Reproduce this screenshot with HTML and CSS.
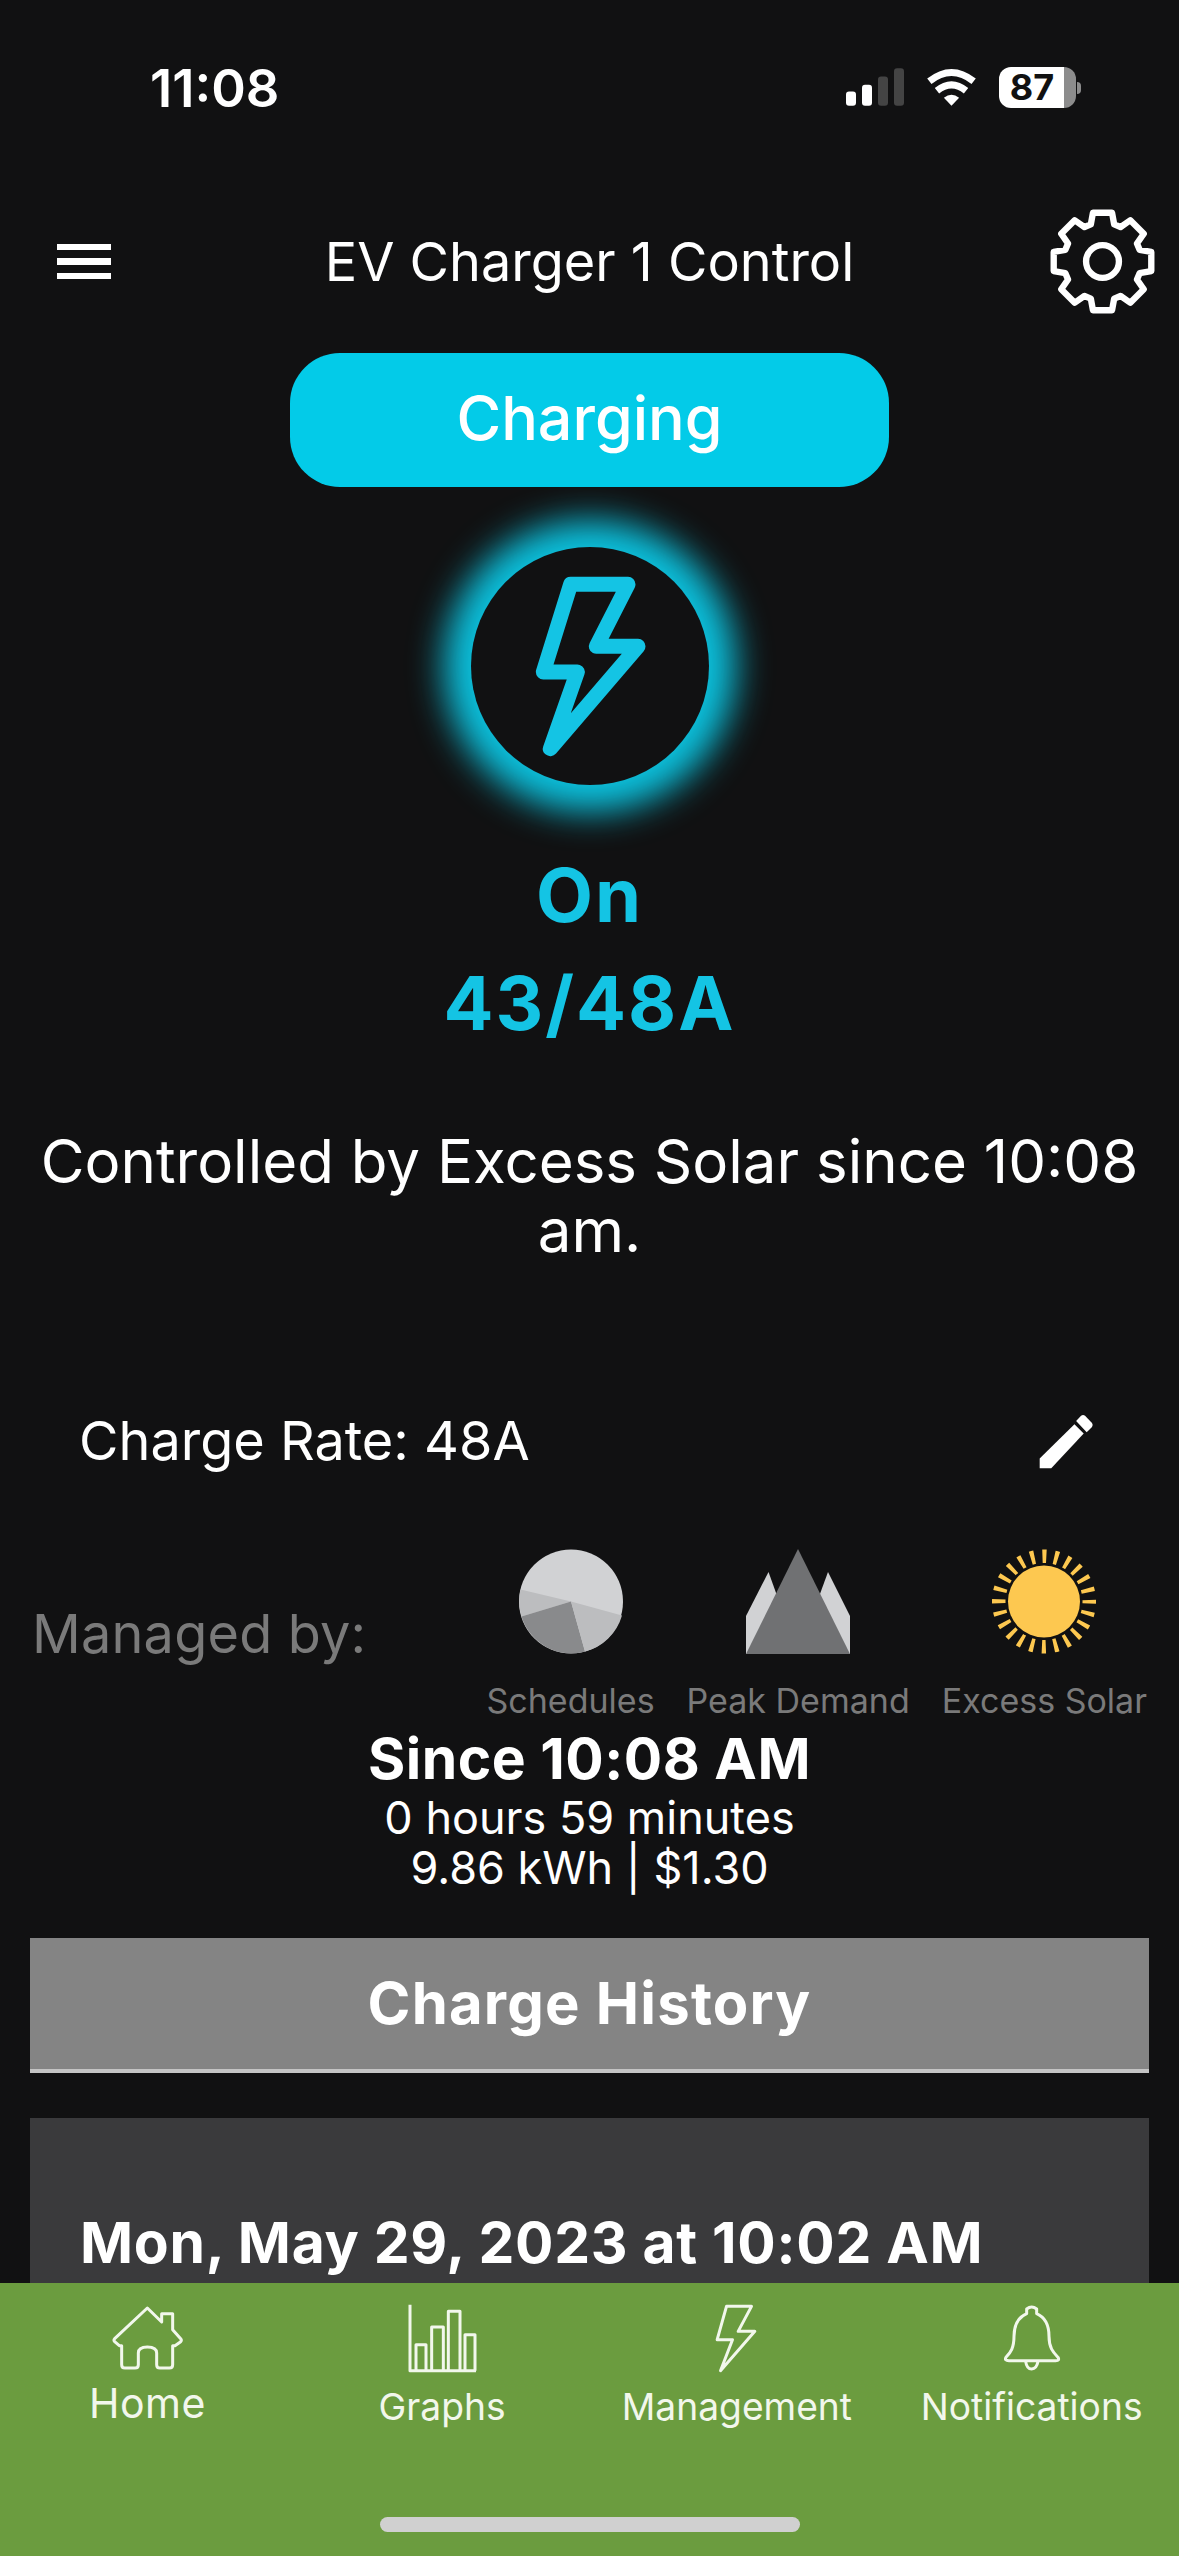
FILE: index.html
```html
<!DOCTYPE html>
<html lang="en">
<head>
    <meta charset="UTF-8">
    <meta name="viewport" content="width=device-width, initial-scale=1.0">
    <title>EV Charger 1 Control</title>
    <link rel="stylesheet" href="styles.css">
</head>
<body>
    <div class="screen">
        <div class="content">
            <div class="status-bar">
                <div class="status-time">11:08</div>
                <div class="status-icons">
                    <svg class="signal-icon" viewBox="138 115 174 113">
                        <rect x="138" y="185" width="30" height="43" rx="9" fill="#fff"/>
                        <rect x="186" y="165" width="30" height="63" rx="9" fill="#fff"/>
                        <rect x="234" y="140" width="30" height="88" rx="9" fill="#444"/>
                        <rect x="282" y="115" width="30" height="113" rx="9" fill="#444"/>
                    </svg>
                    <svg class="wifi-icon" viewBox="378 112 154 118">
                        <path d="M388 155Q455 102 522 155" fill="none" stroke="#fff" stroke-width="21"/>
                        <path d="M411 184Q455 148 499 184" fill="none" stroke="#fff" stroke-width="21"/>
                        <path d="M432 205Q455 187 478 205L455 229Z" fill="#fff"/>
                    </svg>
                    <div class="battery"><span class="battery-level">87</span></div>
                    <div class="battery-nub"></div>
                </div>
            </div>

            <div class="top-nav">
                <div class="menu-icon"><span></span><span></span><span></span></div>
                <div class="top-title">EV Charger 1 Control</div>
                <svg class="gear-icon" viewBox="-49.500 -49.500 99 99">
                    <polygon fill="none" stroke="#fff" stroke-width="6" stroke-linejoin="round" points="-11,-35 -9,-46 9,-46 11,-35 17,-32.500 26.200,-38.900 38.900,-26.200 32.500,-17 35,-11 46,-9 46,9 35,11 32.500,17 38.900,26.200 26.200,38.900 17,32.500 11,35 9,46 -9,46 -11,35 -17,32.500 -26.200,38.900 -38.900,26.200 -32.500,17 -35,11 -46,9 -46,-9 -35,-11 -32.500,-17 -38.900,-26.200 -26.200,-38.900 -17,-32.500"/>
                    <circle r="15.500" fill="none" stroke="#fff" stroke-width="6"/>
                </svg>
            </div>

            <div class="state-btn">Charging</div>

            <div class="charge-ring">
                <svg class="bolt-icon" viewBox="211 140 714 714">
                    <path d="M510 252H682L587 438H712L449 745L530 515H428Z" fill="none" stroke="#14c4e4" stroke-width="45" stroke-linejoin="round"/>
                </svg>
            </div>

            <div class="charge-on">On</div>
            <div class="charge-amps">43/48A</div>
            <div class="controlled-by">Controlled by Excess Solar since 10:08 am.</div>

            <div class="rate-row">
                <div class="rate-label">Charge Rate: 48A</div>
                <svg class="pencil-icon" viewBox="80 48 172 172">
                    <path d="M85 185L190 82L218 110L120 215H85Z" fill="#fff"/>
                    <path d="M195 72L210 56Q216 52 222 56L243 78Q247 84 243 90L227 106Z" fill="#fff"/>
                </svg>
            </div>

            <div class="managed-row">
                <div class="managed-label">Managed by:</div>
                <div class="managed-options">
                    <div class="managed-option">
                        <svg class="managed-icon" viewBox="0 0 104 104">
                            <circle cx="52" cy="52" r="52" fill="#d1d2d4"/>
                            <path d="M1.500 40L52 52L2.500 67A52 52 0 0 1 1.500 40Z" fill="#bcbdbf"/>
                            <path d="M2.500 67L52 52L66 102A52 52 0 0 1 2.500 67Z" fill="#898a8c"/>
                            <path d="M52 52L103 66A52 52 0 0 1 66 102Z" fill="#bcbdbf"/>
                        </svg>
                        <div class="managed-name">Schedules</div>
                    </div>
                    <div class="managed-option">
                        <svg class="managed-icon" viewBox="0 0 104 105">
                            <path d="M0 105V67L22.500 23L52 105Z" fill="#d1d2d4"/>
                            <path d="M104 105V67L82 23L52 105Z" fill="#d1d2d4"/>
                            <path d="M52 0L104 105H0Z" fill="#707173"/>
                        </svg>
                        <div class="managed-name">Peak Demand</div>
                    </div>
                    <div class="managed-option">
                        <svg class="managed-icon" viewBox="0 0 104 104">
                            <circle cx="52" cy="52" r="36" fill="#fdc850"/>
                            <circle cx="52" cy="52" r="45.250" fill="none" stroke="#fdc850" stroke-width="13.500" stroke-dasharray="4 7.850" stroke-dashoffset="2"/>
                        </svg>
                        <div class="managed-name">Excess Solar</div>
                    </div>
                </div>
            </div>

            <div class="session">
                <div class="session-since">Since 10:08 AM</div>
                <div class="session-line">0 hours 59 minutes</div>
                <div class="session-line">9.86 kWh | $1.30</div>
            </div>

            <div class="history-btn">Charge History</div>

            <div class="history-card">
                <div class="history-date">Mon, May 29, 2023 at 10:02 AM</div>
            </div>
        </div>

        <div class="tab-bar">
            <div class="tabs">
                <div class="tab tab-active">
                    <svg class="tab-icon" viewBox="150 40 225 210">
                        <path d="M262 55L305 97V72H338V120L362 147Q366 152 362 156L345 168H338V225Q338 235 328 235H300Q290 235 290 225V190Q290 172 262 172Q235 172 235 190V225Q235 235 225 235H195Q185 235 185 225V168H178L164 156Q160 152 164 147Z"/>
                    </svg>
                    <div class="tab-label">Home</div>
                </div>
                <div class="tab">
                    <svg class="tab-icon" viewBox="1035 40 225 210">
                        <path d="M1050 45V243H1248"/>
                        <path d="M1068 243V165H1098V243M1115 243V112H1150V243M1165 243V65H1200V243M1215 243V135H1245V243"/>
                    </svg>
                    <div class="tab-label">Graphs</div>
                </div>
                <div class="tab">
                    <svg class="tab-icon" viewBox="117.500 40 225 210">
                        <path d="M200 50H275L235 125H285L182 243L218 150H172Z"/>
                    </svg>
                    <div class="tab-label">Management</div>
                </div>
                <div class="tab">
                    <svg class="tab-icon" viewBox="1000 40 225 210">
                        <path d="M1098 72V58Q1113 46 1128 58V72C1158 85 1165 115 1165 140C1165 175 1178 188 1192 203Q1198 213 1185 213H1045Q1030 213 1036 203C1050 188 1060 175 1060 140C1060 115 1068 85 1098 72Z"/>
                        <path d="M1095 215Q1098 238 1113 238Q1128 238 1132 215"/>
                    </svg>
                    <div class="tab-label">Notifications</div>
                </div>
            </div>
            <div class="home-indicator"></div>
        </div>
    </div>
</body>
</html>
```

FILE: styles.css
```css
* {
    box-sizing: border-box;
}

body {
    margin: 0;
    background-color: #111112;
    font-family: 'Inter', 'Liberation Sans', sans-serif;
    color: #fff;
}

.screen {
    width: 1179px;
    height: 2556px;
    display: flex;
    flex-direction: column;
    overflow: hidden;
}

.content {
    flex: 1;
    min-height: 0;
    overflow: hidden;
    display: flex;
    flex-direction: column;
    align-items: center;
}

/* status bar */
.status-bar {
    width: 100%;
    height: 209px;
    flex: none;
    padding: 60px 98px 0 150px;
    display: flex;
    justify-content: space-between;
    align-items: flex-start;
}

.status-time {
    font-size: 52.500px;
    line-height: 56px;
    font-weight: 600;
}

.status-icons {
    display: flex;
    align-items: flex-start;
    padding-top: 7px;
}

.signal-icon {
    width: 58px;
    height: 38px;
    margin-top: 1px;
    margin-right: 22px;
}

.wifi-icon {
    width: 51px;
    height: 39px;
    margin-right: 22px;
}

.battery {
    width: 77px;
    height: 41px;
    border-radius: 12px;
    background: linear-gradient(90deg, #fff 85%, #8c8c8c 85%);
    padding-right: 11px;
    text-align: center;
}

.battery-level {
    font-size: 36px;
    line-height: 41px;
    font-weight: 700;
    color: #111;
}

.battery-nub {
    width: 4px;
    height: 12px;
    margin: 15px 0 0 1px;
    border-radius: 0 6px 6px 0;
    background-color: #8c8c8c;
}

/* top nav */
.top-nav {
    width: 100%;
    height: 104px;
    flex: none;
    padding: 0 24px 0 24px;
    display: grid;
    grid-template-columns: minmax(0, 1fr) auto minmax(0, 1fr);
    align-items: center;
}

.menu-icon {
    width: 54px;
    margin-left: 33px;
    display: flex;
    flex-direction: column;
    gap: 8px;
}

.menu-icon span {
    height: 6.500px;
    background-color: #fff;
}

.top-title {
    font-size: 54px;
    line-height: 60px;
}

.gear-icon {
    width: 105px;
    height: 105px;
    justify-self: end;
}

/* charging state */
.state-btn {
    width: 599px;
    height: 134px;
    flex: none;
    margin-top: 40px;
    border-radius: 50px;
    background-color: #03cbe8;
    font-size: 61px;
    line-height: 131px;
    font-weight: 500;
    text-align: center;
}

.charge-ring {
    width: 238px;
    height: 238px;
    flex: none;
    margin-top: 60px;
    border-radius: 50%;
    background-color: #111112;
    box-shadow: 0 0 34px 27px #0cc0dc;
}

.bolt-icon {
    display: block;
    width: 238px;
    height: 238px;
}

.charge-on,
.charge-amps {
    font-size: 74px;
    line-height: 80px;
    font-weight: 700;
    letter-spacing: 2px;
    color: #14c4e4;
}

.charge-on {
    margin-top: 70px;
}

.charge-amps {
    margin-top: 28px;
}

.controlled-by {
    width: 1130px;
    margin-top: 84px;
    font-size: 60px;
    line-height: 69px;
    text-align: center;
}

/* charge rate */
.rate-row {
    width: 100%;
    margin-top: 146px;
    padding: 0 84px 0 79px;
    display: flex;
    justify-content: space-between;
    align-items: center;
}

.rate-label {
    font-size: 54px;
    line-height: 60px;
}

.pencil-icon {
    width: 57px;
    height: 57px;
}

/* managed by */
.managed-row {
    width: 100%;
    margin-top: 78px;
    padding: 0 32px;
    display: flex;
    justify-content: space-between;
    align-items: center;
}

.managed-label {
    margin-bottom: 3px;
    font-size: 54px;
    line-height: 64px;
    letter-spacing: 0.200px;
    color: #7a7a7a;
}

.managed-options {
    display: flex;
    gap: 32px;
}

.managed-option {
    display: flex;
    flex-direction: column;
    align-items: center;
}

.managed-icon {
    width: 104px;
    height: 105px;
}

.managed-name {
    margin-top: 27px;
    font-size: 34px;
    line-height: 40px;
    color: #7a7a7a;
}

/* session */
.session {
    margin-top: 4px;
    text-align: center;
}

.session-since {
    font-size: 57px;
    line-height: 68px;
    font-weight: 700;
    letter-spacing: 0.500px;
}

.session-line {
    font-size: 45px;
    line-height: 50px;
}

.history-btn {
    width: 1119px;
    height: 135px;
    flex: none;
    margin-top: 45px;
    border-bottom: 4px solid #c4c4c4;
    background-color: #848484;
    font-size: 58px;
    line-height: 131px;
    font-weight: 700;
    letter-spacing: 1.200px;
    text-align: center;
}

.history-card {
    width: 1119px;
    height: 400px;
    flex: none;
    margin-top: 45px;
    padding: 92px 50px 0;
    background-color: #3a3a3c;
}

.history-date {
    font-size: 57px;
    line-height: 66px;
    font-weight: 700;
    letter-spacing: 0.700px;
    white-space: nowrap;
}

/* bottom tabs */
.tab-bar {
    height: 273px;
    flex: none;
    display: flex;
    flex-direction: column;
    align-items: center;
    background-color: #6b9c3f;
}

.tabs {
    width: 100%;
    padding-top: 20px;
    display: grid;
    grid-template-columns: repeat(4, 1fr);
}

.tab {
    display: flex;
    flex-direction: column;
    align-items: center;
    color: #f2f7ec;
}

.tab-icon {
    width: 75px;
    height: 70px;
    fill: none;
    stroke: #f2f7ec;
    stroke-width: 9;
    stroke-linejoin: round;
}

.tab-label {
    margin-top: 12px;
    font-size: 37.200px;
    line-height: 44px;
    white-space: nowrap;
}

.tab-active .tab-label {
    margin-top: 8px;
    font-size: 41px;
    letter-spacing: 0.500px;
}

.home-indicator {
    width: 420px;
    height: 15px;
    margin-top: auto;
    margin-bottom: 24px;
    border-radius: 8px;
    background-color: #d0d0d0;
}
```
